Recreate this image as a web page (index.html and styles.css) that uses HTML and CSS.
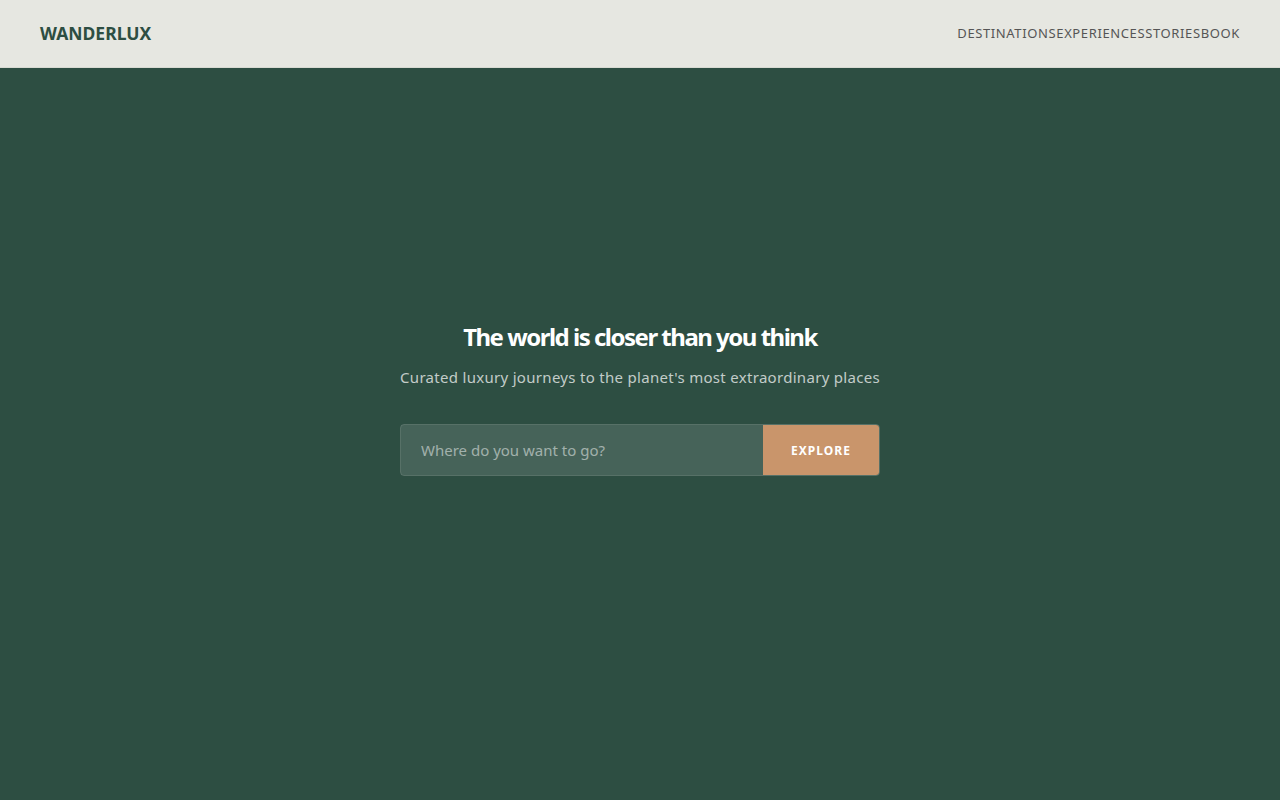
FILE: index.html
```html
<!DOCTYPE html>
<html lang="en">
<head>
    <meta charset="UTF-8">
    <meta name="viewport" content="width=device-width, initial-scale=1.0">
    <title>Wanderlux</title>
    <link rel="stylesheet" href="styles.css">
</head>
<body>
    <header class="site-header">
        <a class="logo" href="#">WANDERLUX</a>
        <nav class="nav">
            <a href="#">Destinations</a>
            <a href="#">Experiences</a>
            <a href="#">Stories</a>
            <a href="#">Book</a>
        </nav>
    </header>

    <main class="hero">
        <h1>The world is closer than you think</h1>
        <p class="tagline">Curated luxury journeys to the planet's most extraordinary places</p>
        <form class="search">
            <input type="text" placeholder="Where do you want to go?">
            <button type="submit">Explore</button>
        </form>
    </main>
</body>
</html>
```

FILE: styles.css
```css
* {
    box-sizing: border-box;
}
body {
    margin: 0;
    font-family: 'Noto Sans', sans-serif;
    background-color: #2d4e42;
    min-height: 100vh;
    display: flex;
    flex-direction: column;
}
.site-header {
    height: 68px;
    background-color: #e6e7e1;
    border-bottom: 1px solid #d8dad2;
    display: flex;
    align-items: center;
    justify-content: space-between;
    padding: 0 40px 2px;
}
.logo {
    color: #2d4e42;
    font-size: 17.5px;
    font-weight: 700;
    text-decoration: none;
}
.nav {
    display: flex;
}
.nav a {
    color: #555;
    font-size: 13px;
    text-transform: uppercase;
    letter-spacing: 0.62px;
    text-decoration: none;
}
.hero {
    flex: 1;
    display: flex;
    flex-direction: column;
    align-items: center;
    justify-content: center;
    padding-bottom: 72px;
    text-align: center;
}
.hero h1 {
    margin: 0 0 14px;
    color: #fff;
    font-size: 24px;
    font-weight: 700;
    letter-spacing: -1.5px;
}
.tagline {
    margin: 0 0 37px;
    color: rgba(255, 255, 255, 0.72);
    font-size: 15px;
    letter-spacing: 0.3px;
}
.search {
    width: 480px;
    height: 52px;
    display: flex;
    border: 1px solid rgba(255, 255, 255, 0.2);
    border-radius: 4px;
    overflow: hidden;
}
.search input {
    flex: 1;
    border: none;
    outline: none;
    padding: 0 20px;
    background-color: rgba(255, 255, 255, 0.12);
    color: #fff;
    font-family: inherit;
    font-size: 15px;
}
.search input::placeholder {
    color: rgba(255, 255, 255, 0.5);
}
.search button {
    width: 116px;
    border: none;
    background-color: #c9956b;
    color: #fff;
    font-family: inherit;
    font-size: 12px;
    font-weight: 700;
    letter-spacing: 1px;
    text-transform: uppercase;
    cursor: pointer;
}
```
